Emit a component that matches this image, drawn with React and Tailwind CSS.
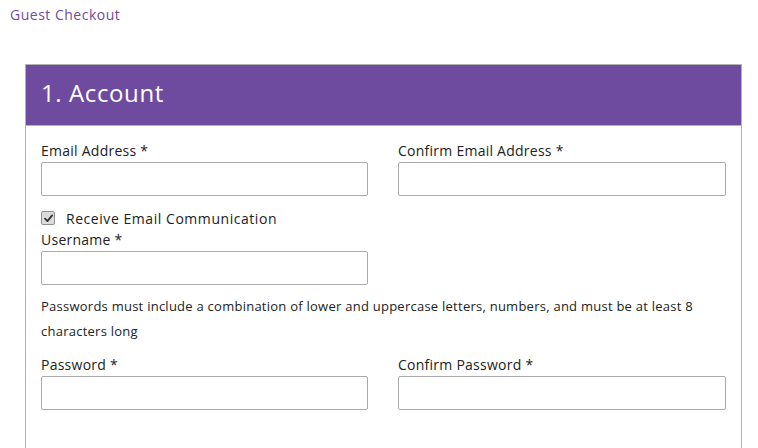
import React from "react";

function Field({ label, className = "" }) {
  return (
    <div className={className}>
      <label className="block text-[14px] leading-[20px] tracking-[0.25px] text-[#222]">
        {label} <span>*</span>
      </label>
      <input
        type="text"
        className="mt-px block h-[34px] w-full rounded-[2px] border border-[#aaa] bg-white"
      />
    </div>
  );
}

export default function App() {
  return (
    <div className="min-h-[448px] bg-white" style={{ fontFamily: '"Open Sans", sans-serif' }}>
      <div className="px-[10px] pt-[5px] text-[14px] leading-[20px] tracking-[0.5px] text-[#6f4c9f]">Guest Checkout</div>
      <div className="ml-[25px] mt-[39px] w-[717px] border border-[#b3b3b3] pb-[60px]">
        <div className="flex h-[61px] items-center border-b border-[#b3b3b3] bg-[#6e4b9e] px-[15px] pb-[4px]">
          <h2 className="text-[24px] leading-none tracking-[0.6px] text-white">1. Account</h2>
        </div>
        <div className="pl-[15px] pr-[15px] pt-[15px]">
          <div className="grid grid-cols-[327px_328px] gap-x-[30px]">
            <Field label="Email Address" />
            <Field label="Confirm Email Address" />
          </div>
          <label className="mt-[10px] flex h-[24px] items-center text-[14px] tracking-[0.55px] text-[#222]">
            <span className="flex h-[14px] w-[14px] items-center justify-center rounded-[2px] border border-[#8f8f8f] bg-[#dcdcdc]">
              <svg viewBox="0 0 12 12" className="h-[11px] w-[11px]">
                <path d="M2.2 6.2 L4.8 8.8 L10 2.6" fill="none" stroke="#333" strokeWidth="2" strokeLinecap="round" strokeLinejoin="round" />
              </svg>
            </span>
            <span className="ml-[11px]">Receive Email Communication</span>
          </label>
          <div className="grid grid-cols-[327px_328px] gap-x-[30px]">
            <Field label="Username" />
          </div>
          <p className="mt-[9px] text-[13px] leading-[25px] tracking-[0.25px] text-[#222]">
            Passwords must include a combination of lower and uppercase letters, numbers, and must be at least 8 characters long
          </p>
          <div className="mt-[11px] grid grid-cols-[327px_328px] gap-x-[30px]">
            <Field label="Password" />
            <Field label="Confirm Password" />
          </div>
        </div>
      </div>
    </div>
  );
}
